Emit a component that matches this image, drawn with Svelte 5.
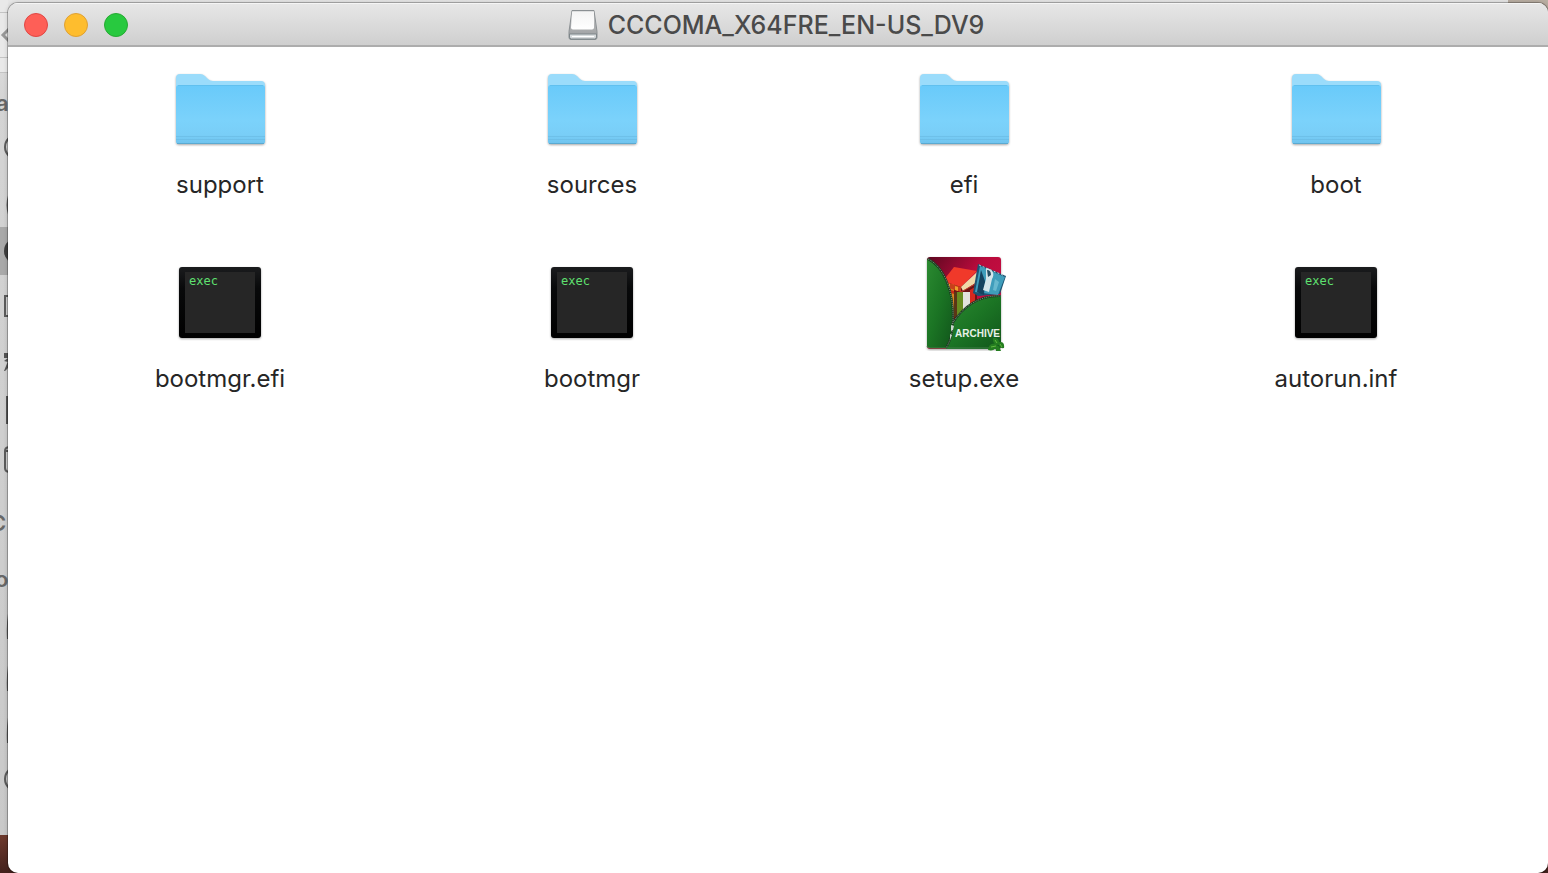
<script>
  const title = 'CCCOMA_X64FRE_EN-US_DV9';

  const controls = [
    { name: 'Close', kind: 'close' },
    { name: 'Minimize', kind: 'minimize' },
    { name: 'Zoom', kind: 'zoom' }
  ];

  const files = [
    { name: 'support', type: 'folder' },
    { name: 'sources', type: 'folder' },
    { name: 'efi', type: 'folder' },
    { name: 'boot', type: 'folder' },
    { name: 'bootmgr.efi', type: 'exec' },
    { name: 'bootmgr', type: 'exec' },
    { name: 'setup.exe', type: 'archive' },
    { name: 'autorun.inf', type: 'exec' }
  ];
</script>

<!-- gradients shared by all the icons -->
<svg class="defs" width="0" height="0" aria-hidden="true">
  <defs>
    <linearGradient id="folder-front" x1="0" y1="0" x2="0" y2="1">
      <stop offset="0" stop-color="#69cafa" />
      <stop offset="0.6" stop-color="#7bd2fb" />
      <stop offset="0.84" stop-color="#79cef7" />
      <stop offset="1" stop-color="#6fc3ee" />
    </linearGradient>
    <linearGradient id="drive-body" x1="0" y1="0" x2="0" y2="1">
      <stop offset="0" stop-color="#c9cbcc" />
      <stop offset="1" stop-color="#999b9d" />
    </linearGradient>
    <linearGradient id="drive-top" x1="0" y1="0" x2="0" y2="1">
      <stop offset="0" stop-color="#f4f4f4" />
      <stop offset="1" stop-color="#fff" />
    </linearGradient>
    <linearGradient id="exec-frame" x1="0" y1="0" x2="0" y2="1">
      <stop offset="0" stop-color="#1b1c1e" />
      <stop offset="0.3" stop-color="#08090a" />
      <stop offset="1" stop-color="#000" />
    </linearGradient>
    <linearGradient id="archive-back" x1="0" y1="0" x2="1" y2="1">
      <stop offset="0" stop-color="#5c0820" />
      <stop offset="0.4" stop-color="#b90b3c" />
      <stop offset="1" stop-color="#d5114a" />
    </linearGradient>
    <linearGradient id="archive-front" x1="0" y1="0" x2="1" y2="1">
      <stop offset="0" stop-color="#2b8a31" />
      <stop offset="0.5" stop-color="#1b7424" />
      <stop offset="1" stop-color="#11551b" />
    </linearGradient>
  </defs>
</svg>

<div class="desktop">
  <div class="behind" aria-hidden="true">
    <svg class="sidebar" width="8" height="835" viewBox="0 0 8 835">
      <rect width="8" height="73" fill="#e9e9e9" />
      <path d="M0 12.5h8M0 57.5h8M0 72.5h8" stroke="#c4c4c4" />
      <path d="M9 29l-6 6 6 6" fill="none" stroke="#989898" stroke-width="3" />
      <rect y="227" width="8" height="48" fill="#a9a9a9" />
      <g fill="none" stroke="#5c5c5c" stroke-width="2">
        <circle cx="17" cy="147" r="12" />
        <path d="M10 193q-5 12 0 24" />
        <path d="M10 296H5v20h5" />
        <path d="M10 447q-5 0-5 4v17q0 4 5 4M5 451h5" />
        <path d="M10 608q-3 14-2 31M10 660q-3 14-2 31M10 712q-3 14-2 31" />
        <circle cx="17" cy="779" r="12" />
      </g>
      <circle cx="17" cy="251" r="13" fill="#3e3e3e" />
      <path d="M4 353h4v5H4zM4 371l4-10v7l-3 3zM4 361l4-3v4zM6 396h2v28H6z" fill="#555" />
      <g class="sidebar-text">
        <text x="-4" y="111">a</text>
        <text x="-10" y="531">C</text>
        <text x="-5" y="587">o</text>
      </g>
    </svg>
  </div>

  <main class="window">
    <header class="titlebar">
      <div class="controls">
        {#each controls as control}
          <button class="control {control.kind}" aria-label={control.name}></button>
        {/each}
      </div>
      <h1 class="title">
        <svg width="30" height="32" viewBox="0 0 30 32" aria-hidden="true">
          <path d="M4 1.500h22l3 21v6q0 2-2 2H3q-2 0-2-2v-6z" fill="url(#drive-body)" stroke="#8b9093" />
          <path d="M4 2.500h22v16q0 2-2 2H5q-2 0-2-2z" fill="url(#drive-top)" />
          <path d="M1.500 25h27v3q0 2-2 2h-23q-2 0-2-2z" fill="#d6dadc" stroke="#7d8589" />
          <path d="M4 27.500h22" stroke="#fff" />
        </svg>
        <span>{title}</span>
      </h1>
    </header>

    <ul class="files">
      {#each files as file}
        <li>
          <button class="file">
            <svg class="icon" width="96" height="96" viewBox="0 0 96 96" aria-hidden="true">
              {#if file.type === 'folder'}
                <path
                  class="shadow"
                  d="M4 17q0-4 4-4h20q3 0 5 2l3 3q2 2 5 2h48q4 0 4 4v56q0 3-3 3H7q-3 0-3-3z"
                  fill="#9bdcfb"
                />
                <path d="M4 27q0-3 3-3h83q3 0 3 3v53q0 3-3 3H7q-3 0-3-3z" fill="url(#folder-front)" />
                <path d="M6 24.500h85" stroke="#5dbce9" stroke-opacity="0.7" />
                <path d="M4 75.500h89M4 78.500h89" stroke="#65b6de" stroke-opacity="0.5" />
                <path d="M5 82.500h87" stroke="#5baad1" />
              {:else if file.type === 'exec'}
                <rect class="shadow" x="7" y="12" width="82" height="71" rx="3" fill="url(#exec-frame)" />
                <rect x="13" y="17" width="70" height="61" fill="#262626" />
                <text class="exec-text" x="17" y="30">exec</text>
              {:else}
                <g transform="translate(4 0)">
                  <rect class="shadow" x="7" y="2" width="74" height="92" rx="3" fill="url(#archive-back)" />
                  <!-- books -->
                  <path d="M25 29l32-1v24L34 70z" fill="#6d1414" />
                  <path d="M25 29h9v31l-4 2z" fill="#d8841f" />
                  <path d="M25 33l9 3v3l-9-3z" fill="#c92a17" />
                  <path d="M34 37h5v25h-5z" fill="#5c3516" />
                  <path d="M37 37h6v23h-6z" fill="#688c20" />
                  <path d="M43 37h7v18h-7z" fill="#e3e3dc" />
                  <path d="M50 35l5-3v22h-5z" fill="#d6281f" />
                  <path d="M23 26l11-14 23 4-16 16z" fill="#f0392a" />
                  <path d="M23 26l18 6v5l-18-6z" fill="#c8401b" />
                  <path d="M27 28l3 1v5l-3-1zM35 31l3 1v4l-3-1z" fill="#efa02b" />
                  <path d="M41 32l16-15v10l-14 9z" fill="#f0d9a8" />
                  <path d="M41 37l16-9" stroke="#c0392b" />
                  <!-- photos -->
                  <path d="M58 9l28 12-6 18-22 2-5-3z" fill="#1d5372" />
                  <path d="M60 11l25 11-7 18-23-3z" fill="#3f9dbb" />
                  <path d="M61 15l-4 22 7 3 1-14z" fill="#16435f" />
                  <path d="M66 13c7 1 9 6 6 11l-3 13-6-2 3-11z" fill="#d5e5ea" />
                  <path d="M67 15q4 0 4 5l-3 2z" fill="#254d61" />
                  <path d="M75 24l4 3-3 9-3-1z" fill="#68b9cf" />
                  <path d="M59 10l26 11" stroke="#b8d0d9" stroke-dasharray="2 2" />
                  <!-- unzipped cover -->
                  <path d="M8 4c15 7 26 31 25 61q0 17-7 28H10q-3 0-3-3V5z" fill="url(#archive-front)" />
                  <path d="M81 41v50q0 3-3 3H26q4-7 6-26C44 50 61 40 81 41z" fill="url(#archive-front)" />
                  <path
                    d="M8 4c15 7 26 31 25 61q0 17-7 28M32 69C44 50 61 40 81 41"
                    fill="none"
                    stroke="#193c1e"
                    stroke-width="2"
                  />
                  <path
                    d="M8 4c15 7 26 31 25 61q0 17-7 28M32 69C44 50 61 40 81 41"
                    fill="none"
                    stroke="#7f9381"
                    stroke-dasharray="1 1"
                  />
                  <path d="M31 70l3 1-1 4-2 1zM30 79l2 1-2 5z" fill="#cad5ca" />
                  <path d="M7 91q0 2 3 2h66" fill="none" stroke="#3f7e47" />
                  <text class="archive-text" x="35" y="82">ARCHIVE</text>
                  <!-- leaves -->
                  <path
                    d="M73 83q7-1 6 7-7-1-6-7zM68 95q1-8 9-6-1 8-9 6zM79 87q6-1 5 6-6 1-5-6zM75 90q4-1 6 6h-5z"
                    fill="#247d20"
                  />
                  <path d="M71 92l5-1M80 89l2 3M75 85l2 3" stroke="#5fb83e" />
                </g>
              {/if}
            </svg>
            <span class="name">{file.name}</span>
          </button>
        </li>
      {/each}
    </ul>
  </main>
</div>

<style>
  :global(body) {
    margin: 0;
  }

  .defs {
    position: absolute;
  }

  .desktop {
    position: relative;
    display: flex;
    box-sizing: border-box;
    min-height: 100vh;
    padding: 3px 0 0 8px;
    overflow: hidden;
    background: linear-gradient(#b9aea2 0, #8d7a70 20%, #6b382c 96%, #43211c 100%);
    font-family: Inter, 'Noto Sans', sans-serif;
  }

  /* the Finder window that shows past the left edge */
  .behind {
    position: absolute;
    top: 0;
    left: 0;
    right: 40px;
    bottom: 38px;
    background: linear-gradient(#e6e6e6 0, #d4d4d4 12%, #c9c9c9 100%);
  }

  .sidebar {
    display: block;
  }

  .sidebar-text {
    font-size: 22px;
    font-weight: 600;
    fill: #686868;
  }

  .window {
    position: relative;
    flex: 1;
    overflow: hidden;
    border-radius: 10px;
    background: #fff;
    box-shadow: 0 0 0 1px rgba(0, 0, 0, 0.25), 0 0 5px rgba(0, 0, 0, 0.2);
  }

  .titlebar {
    display: grid;
    grid-template-columns: 1fr auto 1fr;
    align-items: center;
    box-sizing: border-box;
    height: 44px;
    padding: 2px 20px 0 16px;
    border-bottom: 2px solid #adadad;
    background: linear-gradient(#e7e7e7, #cfcfcf);
    box-shadow: inset 0 1px #f5f5f5;
  }

  .controls {
    display: flex;
    gap: 16px;
  }

  .control {
    box-sizing: border-box;
    width: 24px;
    height: 24px;
    padding: 0;
    border: 1px solid;
    border-radius: 50%;
  }

  .close {
    border-color: #df4744;
    background: #fe5f57;
  }

  .minimize {
    border-color: #dea034;
    background: #febd2e;
  }

  .zoom {
    border-color: #27a933;
    background: #28c93f;
  }

  .title {
    display: flex;
    align-items: center;
    gap: 10px;
    margin: 0;
    color: #4a4a4a;
    font-size: 25px;
    font-weight: 500;
    line-height: 32px;
    white-space: nowrap;
  }

  .files {
    display: grid;
    grid-template-columns: repeat(4, 1fr);
    row-gap: 54px;
    margin: 0;
    padding: 14px 26px;
    list-style: none;
  }

  .files li {
    display: flex;
    justify-content: center;
  }

  .file {
    display: flex;
    flex-direction: column;
    align-items: center;
    gap: 12px;
    padding: 0;
    border: 0;
    background: none;
    color: #262626;
    font-family: inherit;
  }

  .icon {
    display: block;
  }

  .shadow {
    filter: drop-shadow(0 1px 1px rgba(0, 0, 0, 0.35));
  }

  .exec-text {
    font-family: 'DejaVu Sans Mono', monospace;
    font-size: 12px;
    fill: #5fe070;
  }

  .archive-text {
    font-family: 'Liberation Sans', sans-serif;
    font-size: 10px;
    font-weight: 700;
    fill: #e9f1e8;
  }

  .name {
    font-size: 24px;
    line-height: 32px;
  }
</style>
